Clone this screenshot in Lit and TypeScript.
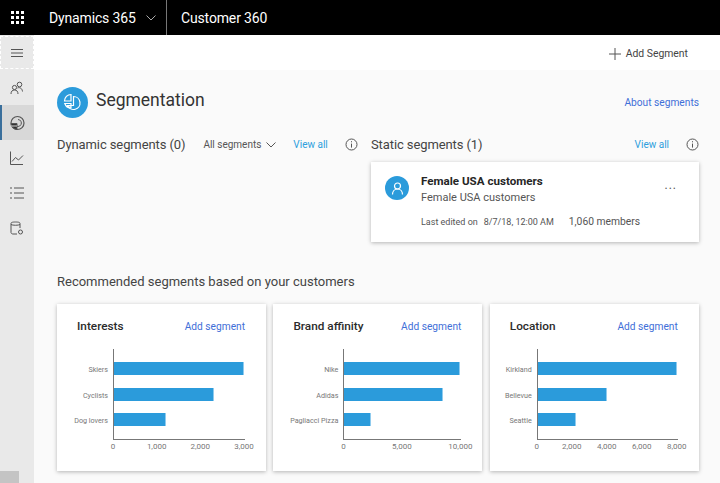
import { LitElement, html, css, svg } from "lit";
import { customElement, property } from "lit/decorators.js";

const FONT = css`Roboto, "Open Sans", "Liberation Sans", sans-serif`;

interface Bar {
	label: string;
	value: number;
}

const chevron = html`<svg width="10" height="6" viewBox="0 0 10 6" fill="none" stroke="currentColor" stroke-width="1">
	<path d="M.5.5 5 5 9.5.5" />
</svg>`;

const infoIcon = html`<svg class="info" width="13" height="13" viewBox="0 0 13 13" fill="none" stroke="#555" stroke-width="1">
	<circle cx="6.5" cy="6.5" r="5.5" />
	<path d="M6.5 5.6v4M6.5 3.2v1.1" />
</svg>`;

const navIcons = [
	svg`<circle cx="10.5" cy="4.5" r="2.3"/><path d="M8.5 8c1.5-.8 4.5-.5 5 3.5"/><circle cx="5.5" cy="7.5" r="2.1"/><path d="M2 14c0-2.5 1.2-4 3.5-4S9 11.5 9 14"/>`,
	svg`<circle cx="8.5" cy="8" r="6.5" stroke-width="1.2"/><path d="M9 4.5a3.5 3.5 0 1 1-3 5.5"/><path d="M2 8.5h6v6a6.5 6.5 0 0 1-6-6z" fill="#333"/><path d="M2 11h6" stroke="#d8d8d8"/>`,
	svg`<path d="M1.5 1.5v13H14"/><path d="M3 11.5l3.5-4 3 2.5 4.5-4.5"/>`,
	svg`<path d="M5 3h10M5 8h10M5 13h10"/><path d="M2 2v2M2 7v2M2 12v2"/>`,
	svg`<path d="M8 14H4c-1 0-2-.6-2-1.5v-9C2 2.5 3 2 6.5 2s4.5.5 4.5 1.5V8M2 4.5c1.5 1 7.5 1 9 0"/><circle cx="11.5" cy="12" r="2"/>`,
];

@customElement("bar-card")
export class BarCard extends LitElement {
	@property() heading = "";
	@property({ type: Number }) max = 1;
	@property({ type: Number }) labelWidth = 50;
	@property({ attribute: false }) bars: Bar[] = [];
	@property({ attribute: false }) ticks: string[] = [];

	static styles = css`
		:host {
			display: block;
			background: #fff;
			box-shadow: 0 1px 4px rgba(0, 0, 0, 0.28);
			padding: 14px 21px 0 20px;
			height: 167px;
			box-sizing: border-box;
			font-family: ${FONT};
		}
		.top {
			display: flex;
			justify-content: space-between;
			align-items: center;
			height: 16px;
		}
		.title {
			font-size: 11.8px;
			font-weight: 500;
			color: #2b2b2b;
		}
		.add {
			font-size: 10.2px;
			color: #3f6fd8;
		}
		.plot {
			display: flex;
			margin: 15px 0 0 -20px;
		}
		.labels {
			display: flex;
			flex-direction: column;
			box-sizing: border-box;
			padding: 14px 5px 0 0;
			gap: 12.5px;
			text-align: right;
			font-size: 7.2px;
			color: #777;
		}
		.labels div {
			height: 13px;
			line-height: 13px;
			white-space: nowrap;
		}
		.area {
			flex: 1;
			height: 91px;
			box-sizing: border-box;
			border-left: 1px solid #777;
			border-bottom: 1px solid #777;
			display: flex;
			flex-direction: column;
			padding: 13px 1px 0 0;
			gap: 12.5px;
		}
		.bar {
			height: 13px;
			background: #2b9bdb;
			border-right: 1px solid #8fcbee;
			box-sizing: border-box;
		}
		.ticks {
			display: flex;
			justify-content: space-between;
			font-size: 8px;
			color: #777;
			margin: 2px 1px 0 0;
		}
		.ticks span {
			width: 0;
			display: flex;
			justify-content: center;
			white-space: nowrap;
		}
	`;

	render() {
		return html`
			<div class="top">
				<span class="title">${this.heading}</span>
				<span class="add">Add segment</span>
			</div>
			<div class="plot">
				<div class="labels" style="width:${this.labelWidth}px">
					${this.bars.map((b) => html`<div>${b.label}</div>`)}
				</div>
				<div class="area">
					${this.bars.map(
						(b) => html`<div class="bar" style="width:${(b.value / this.max) * 100}%"></div>`
					)}
				</div>
			</div>
			<div class="ticks" style="margin-left:${this.labelWidth - 20}px">
				${this.ticks.map((t) => html`<span>${t}</span>`)}
			</div>
		`;
	}
}

@customElement("app-root")
export class AppRoot extends LitElement {
	static styles = css`
		:host {
			display: block;
			height: 483px;
			overflow: hidden;
			font-family: ${FONT};
			color: #333;
			background: #fafafa;
			white-space: nowrap;
		}
		.topbar {
			height: 35px;
			background: #000;
			color: #fff;
			display: flex;
			align-items: center;
			font-size: 14px;
			letter-spacing: -0.15px;
		}
		.waffle {
			display: grid;
			grid-template-columns: repeat(3, 3px);
			gap: 2px;
			margin: 0 25px 0 11px;
		}
		.waffle i {
			height: 3px;
			background: #fff;
		}
		.brand {
			display: flex;
			align-items: center;
			width: 117px;
			gap: 10px;
			padding-top: 1px;
		}
		.brand svg {
			color: #aaa;
		}
		.app {
			border-left: 1px solid #777;
			height: 35px;
			line-height: 36px;
			padding-left: 14px;
		}
		.main {
			display: flex;
			height: 448px;
		}
		.side {
			width: 34px;
			flex: none;
			background: #e9e9e9;
			display: flex;
			flex-direction: column;
			position: relative;
		}
		.menu {
			height: 33px;
			margin: 1px 0;
			border: 1px dashed #fff;
			box-sizing: border-box;
			display: flex;
			align-items: center;
			justify-content: center;
		}
		.nav {
			height: 35px;
			display: flex;
			align-items: center;
			justify-content: center;
			box-sizing: border-box;
		}
		.nav.active {
			background: #d8d8d8;
			border-left: 2px solid #3a6f9c;
			padding-right: 2px;
		}
		.thumb {
			position: absolute;
			left: 0;
			bottom: 0;
			width: 19px;
			height: 12px;
			background: #c4c4c4;
		}
		.content {
			flex: 1;
			min-width: 0;
		}
		.cmd {
			height: 35px;
			box-sizing: border-box;
			padding: 1px 32px 0 0;
			background: #fff;
			display: flex;
			align-items: center;
			justify-content: flex-end;
			gap: 5px;
			font-size: 10.4px;
			color: #444;
		}
		.cmd svg {
			margin-top: 2px;
		}
		.body {
			padding: 17px 21px 0 23px;
		}
		.pagehead {
			display: flex;
			align-items: center;
			gap: 8px;
			height: 31px;
		}
		.badge {
			width: 31px;
			height: 31px;
			border-radius: 50%;
			background: #2b9bdb;
			display: flex;
			align-items: center;
			justify-content: center;
			flex: none;
		}
		h1 {
			margin: 0 0 5px;
			font-size: 17.5px;
			font-weight: 400;
			color: #333;
			flex: 1;
		}
		a {
			font-size: 10.2px;
			color: #3f6fd8;
		}
		.cols {
			display: grid;
			grid-template-columns: 314px 328px;
			margin-top: 15px;
		}
		.col-head {
			display: flex;
			align-items: center;
			height: 24px;
			padding-bottom: 1px;
			box-sizing: border-box;
		}
		h2 {
			margin: 0;
			font-size: 13px;
			font-weight: 400;
			color: #444;
		}
		.col-head h2 {
			letter-spacing: -0.1px;
		}
		.filter {
			display: flex;
			align-items: center;
			gap: 5px;
			font-size: 10px;
			color: #555;
			margin-left: 18px;
		}
		.view {
			font-size: 10px;
			color: #2e9fdd;
		}
		.dyn .view {
			margin-left: 17px;
		}
		.dyn .info {
			margin-left: 17px;
		}
		.stat .view {
			margin-left: auto;
		}
		.stat .info {
			margin-left: 17px;
		}
		.seg {
			display: flex;
			background: #fff;
			box-shadow: 0 1px 4px rgba(0, 0, 0, 0.28);
			height: 80px;
			box-sizing: border-box;
			padding: 11px 14px 0 14px;
			margin-top: 5px;
			gap: 12px;
		}
		.avatar {
			width: 24px;
			height: 24px;
			margin-top: 3px;
			border-radius: 50%;
			background: #2b9bdb;
			display: flex;
			align-items: center;
			justify-content: center;
			flex: none;
		}
		.seg-body {
			flex: 1;
		}
		.seg-title {
			font-size: 11.6px;
			font-weight: 700;
			color: #262626;
			line-height: 16px;
		}
		.seg-sub {
			font-size: 11px;
			color: #555;
			line-height: 17px;
		}
		.seg-meta {
			display: flex;
			align-items: center;
			margin-top: 9px;
			font-size: 9px;
			color: #555;
			line-height: 14px;
		}
		.seg-meta .date {
			margin-left: 6px;
		}
		.seg-meta .members {
			margin-left: 15px;
			font-size: 10.3px;
		}
		.dots {
			font-size: 12px;
			color: #555;
			letter-spacing: 1px;
			padding: 5px 8px 0 0;
		}
		.rec {
			margin: 32px 0 15px;
		}
		.cards {
			display: grid;
			grid-template-columns: repeat(3, 209px);
			gap: 7.4px;
		}
	`;

	render() {
		return html`
			<div class="topbar">
				<div class="waffle">${Array.from({ length: 9 }, () => html`<i></i>`)}</div>
				<div class="brand">Dynamics 365 ${chevron}</div>
				<div class="app">Customer 360</div>
			</div>
			<div class="main">
				<nav class="side">
					<div class="menu">
						<svg width="14" height="10" viewBox="0 0 14 10" stroke="#555" stroke-width="1">
							<path d="M1 1.5h12M1 5h12M1 8.5h12" />
						</svg>
					</div>
					${navIcons.map(
						(icon, i) => html`<div class="nav ${i === 1 ? "active" : ""}">
							<svg width="16" height="16" viewBox="0 0 16 16" fill="none" stroke="#555" stroke-width="1">${icon}</svg>
						</div>`
					)}
					<div class="thumb"></div>
				</nav>
				<div class="content">
					<div class="cmd">
						<svg width="12" height="12" viewBox="0 0 12 12" stroke="#555" stroke-width="1">
							<path d="M6 0v12M0 6h12" />
						</svg>
						Add Segment
					</div>
					<div class="body">
						<div class="pagehead">
							<div class="badge">
								<svg width="19" height="19" viewBox="0 0 19 19" fill="none" stroke="#fff" stroke-width="1.2">
									<path d="M10.5 3.5a6.5 6.5 0 1 1-6 9h6z" />
									<path d="M8 1.5A6.5 6.5 0 0 0 1.5 8H8zM1.8 10.5H8V15a6.5 6.5 0 0 1-6.2-4.5zM3 13h5" />
								</svg>
							</div>
							<h1>Segmentation</h1>
							<a>About segments</a>
						</div>
						<div class="cols">
							<section class="dyn">
								<div class="col-head">
									<h2>Dynamic segments (0)</h2>
									<span class="filter">All segments ${chevron}</span>
									<span class="view">View all</span>
									${infoIcon}
								</div>
							</section>
							<section class="stat">
								<div class="col-head">
									<h2>Static segments (1)</h2>
									<span class="view">View all</span>
									${infoIcon}
								</div>
								<div class="seg">
									<div class="avatar">
										<svg width="13" height="13" viewBox="0 0 13 13" fill="none" stroke="#fff" stroke-width="1.2">
											<circle cx="6.5" cy="4" r="3" />
											<path d="M1.5 12.5c0-3 2-5.5 5-5.5s5 2.5 5 5.5" />
										</svg>
									</div>
									<div class="seg-body">
										<div class="seg-title">Female USA customers</div>
										<div class="seg-sub">Female USA customers</div>
										<div class="seg-meta">
											<span>Last edited on</span>
											<span class="date">8/7/18, 12:00 AM</span>
											<span class="members">1,060 members</span>
										</div>
									</div>
									<div class="dots">...</div>
								</div>
							</section>
						</div>
						<h2 class="rec">Recommended segments based on your customers</h2>
						<div class="cards">
							<bar-card
								heading="Interests"
								.max=${3000}
								.labelWidth=${56}
								.bars=${[
									{ label: "Skiers", value: 3000 },
									{ label: "Cyclists", value: 2300 },
									{ label: "Dog lovers", value: 1200 },
								]}
								.ticks=${["0", "1,000", "2,000", "3,000"]}
							></bar-card>
							<bar-card
								heading="Brand affinity"
								.max=${10000}
								.labelWidth=${70}
								.bars=${[
									{ label: "Nike", value: 10000 },
									{ label: "Adidas", value: 8500 },
									{ label: "Pagliacci Pizza", value: 2300 },
								]}
								.ticks=${["0", "5,000", "10,000"]}
							></bar-card>
							<bar-card
								heading="Location"
								.max=${8000}
								.labelWidth=${47}
								.bars=${[
									{ label: "Kirkland", value: 8000 },
									{ label: "Bellevue", value: 4000 },
									{ label: "Seattle", value: 2200 },
								]}
								.ticks=${["0", "2,000", "4,000", "6,000", "8,000"]}
							></bar-card>
						</div>
					</div>
				</div>
			</div>
		`;
	}
}
